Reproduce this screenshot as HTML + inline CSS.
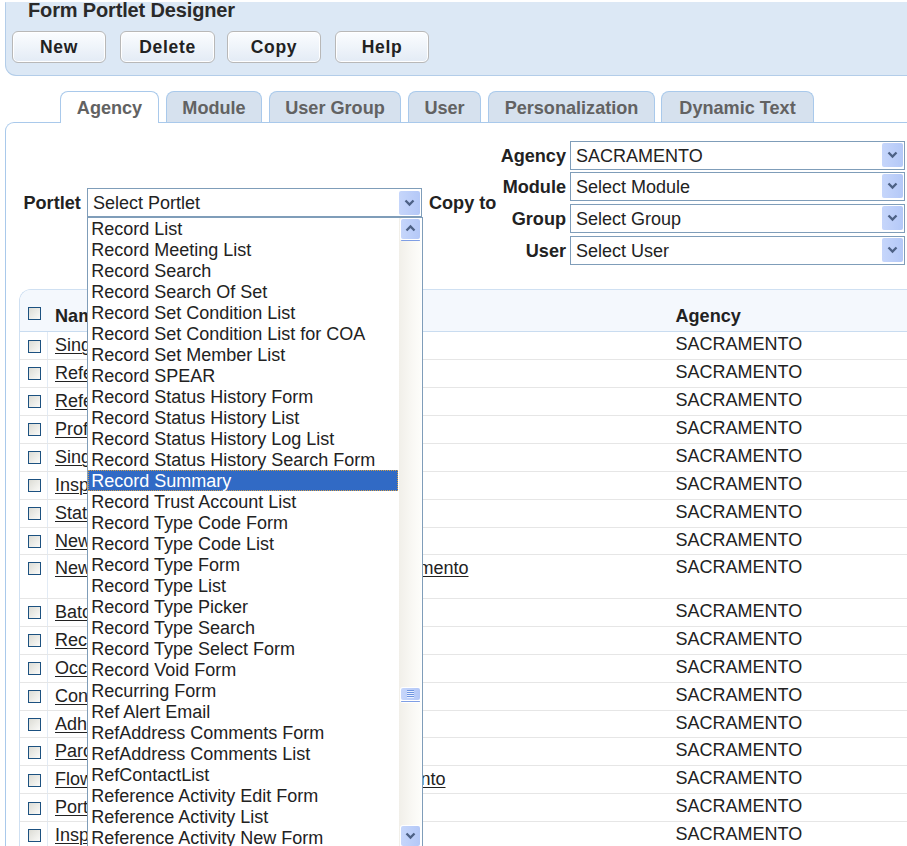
<!DOCTYPE html>
<html><head><meta charset="utf-8"><style>
html,body{margin:0;padding:0;background:#fff;width:907px;height:846px;overflow:hidden;}
body{position:relative;font-family:"Liberation Sans",sans-serif;}
.t{position:absolute;white-space:nowrap;}
.b{position:absolute;box-sizing:border-box;}
.btn{border:1px solid #b8b8b8;border-radius:6px;box-shadow:inset 0 0 0 1px #fff;background:linear-gradient(#fbfdff,#e3ebf5);}
.tab{border:1px solid #a9c9eb;border-bottom:none;border-radius:8px 8px 0 0;background:#d6e1ee;}
.tab.on{background:#fff;}
.sel{border:1px solid #7f9db9;background:#fff;}
.arr{border-radius:2px;background:linear-gradient(90deg,#c6d6fb,#b4c8f7);}
.cb{border:1px solid #1c5180;background:linear-gradient(135deg,#dcdcd5,#fafaf8);}
u{text-decoration:underline;text-underline-offset:1.5px;text-decoration-thickness:1px;}
</style></head><body>

<div class="b " style="left:5px;top:2px;width:910px;height:74px;background:#dce8f5;border:1px solid #b3cde9;border-right:none;border-top-color:#dce8f5;border-bottom-left-radius:11px;"></div>
<div class="t " style="top:0.07px;font-size:20px;line-height:20px;color:#2a2a2a;font-weight:bold;letter-spacing:-0.15px;left:28.00px;">Form Portlet Designer</div>
<div class="b btn" style="left:12px;top:31px;width:94px;height:32px;"></div>
<div class="t" style="left:12px;width:94px;text-align:center;top:38.99px;font-size:17.5px;line-height:17.5px;font-weight:bold;color:#222;letter-spacing:0.7px;">New</div>
<div class="b btn" style="left:120px;top:31px;width:95px;height:32px;"></div>
<div class="t" style="left:120px;width:95px;text-align:center;top:38.99px;font-size:17.5px;line-height:17.5px;font-weight:bold;color:#222;letter-spacing:0.7px;">Delete</div>
<div class="b btn" style="left:227px;top:31px;width:94px;height:32px;"></div>
<div class="t" style="left:227px;width:94px;text-align:center;top:38.99px;font-size:17.5px;line-height:17.5px;font-weight:bold;color:#222;letter-spacing:0.7px;">Copy</div>
<div class="b btn" style="left:335px;top:31px;width:94px;height:32px;"></div>
<div class="t" style="left:335px;width:94px;text-align:center;top:38.99px;font-size:17.5px;line-height:17.5px;font-weight:bold;color:#222;letter-spacing:0.7px;">Help</div>
<div class="b " style="left:5px;top:122px;width:920px;height:760px;border:1px solid #a9c9eb;border-right:none;border-bottom:none;border-top-left-radius:9px;"></div>
<div class="b tab on" style="left:60px;top:91px;width:99px;height:32px;"></div>
<div class="t" style="left:60px;width:99px;text-align:center;top:99.38px;font-size:18.1px;line-height:18.1px;font-weight:bold;color:#626262;">Agency</div>
<div class="b tab" style="left:166px;top:91px;width:96px;height:31px;"></div>
<div class="t" style="left:166px;width:96px;text-align:center;top:99.38px;font-size:18.1px;line-height:18.1px;font-weight:bold;color:#626262;">Module</div>
<div class="b tab" style="left:269px;top:91px;width:132px;height:31px;"></div>
<div class="t" style="left:269px;width:132px;text-align:center;top:99.38px;font-size:18.1px;line-height:18.1px;font-weight:bold;color:#626262;">User Group</div>
<div class="b tab" style="left:408px;top:91px;width:73px;height:31px;"></div>
<div class="t" style="left:408px;width:73px;text-align:center;top:99.38px;font-size:18.1px;line-height:18.1px;font-weight:bold;color:#626262;">User</div>
<div class="b tab" style="left:488px;top:91px;width:167px;height:31px;"></div>
<div class="t" style="left:488px;width:167px;text-align:center;top:99.38px;font-size:18.1px;line-height:18.1px;font-weight:bold;color:#626262;">Personalization</div>
<div class="b tab" style="left:661px;top:91px;width:153px;height:31px;"></div>
<div class="t" style="left:661px;width:153px;text-align:center;top:99.38px;font-size:18.1px;line-height:18.1px;font-weight:bold;color:#626262;">Dynamic Text</div>
<div class="t " style="top:194.18px;font-size:18.1px;line-height:18.1px;color:#222;font-weight:bold;left:23.50px;">Portlet</div>
<div class="t " style="top:194.18px;font-size:18.1px;line-height:18.1px;color:#222;font-weight:bold;left:429.00px;">Copy to</div>
<div class="t " style="top:147.18px;font-size:18.1px;line-height:18.1px;color:#222;font-weight:bold;right:341.00px;">Agency</div>
<div class="b sel" style="left:570px;top:141px;width:335px;height:29px;"></div>
<div class="t " style="top:147.26px;font-size:18.0px;line-height:18.0px;color:#222;left:576.00px;">SACRAMENTO</div>
<div class="b arr" style="left:882px;top:143px;width:21px;height:24px;"><svg width="21" height="24" style="position:absolute;left:0;top:0"><g transform="translate(2.5,5.5)"><path d="M4 4 L8 8 L12 4" stroke="#4d6185" stroke-width="2.3" fill="none"/></g></svg></div>
<div class="t " style="top:178.18px;font-size:18.1px;line-height:18.1px;color:#222;font-weight:bold;right:341.00px;">Module</div>
<div class="b sel" style="left:570px;top:172px;width:335px;height:29px;"></div>
<div class="t " style="top:178.26px;font-size:18.0px;line-height:18.0px;color:#222;left:576.00px;">Select Module</div>
<div class="b arr" style="left:882px;top:174px;width:21px;height:24px;"><svg width="21" height="24" style="position:absolute;left:0;top:0"><g transform="translate(2.5,5.5)"><path d="M4 4 L8 8 L12 4" stroke="#4d6185" stroke-width="2.3" fill="none"/></g></svg></div>
<div class="t " style="top:210.18px;font-size:18.1px;line-height:18.1px;color:#222;font-weight:bold;right:341.00px;">Group</div>
<div class="b sel" style="left:570px;top:204px;width:335px;height:29px;"></div>
<div class="t " style="top:210.26px;font-size:18.0px;line-height:18.0px;color:#222;left:576.00px;">Select Group</div>
<div class="b arr" style="left:882px;top:206px;width:21px;height:24px;"><svg width="21" height="24" style="position:absolute;left:0;top:0"><g transform="translate(2.5,5.5)"><path d="M4 4 L8 8 L12 4" stroke="#4d6185" stroke-width="2.3" fill="none"/></g></svg></div>
<div class="t " style="top:242.18px;font-size:18.1px;line-height:18.1px;color:#222;font-weight:bold;right:341.00px;">User</div>
<div class="b sel" style="left:570px;top:236px;width:335px;height:29px;"></div>
<div class="t " style="top:242.26px;font-size:18.0px;line-height:18.0px;color:#222;left:576.00px;">Select User</div>
<div class="b arr" style="left:882px;top:238px;width:21px;height:24px;"><svg width="21" height="24" style="position:absolute;left:0;top:0"><g transform="translate(2.5,5.5)"><path d="M4 4 L8 8 L12 4" stroke="#4d6185" stroke-width="2.3" fill="none"/></g></svg></div>
<div class="b sel" style="left:87px;top:188px;width:335px;height:29px;"></div>
<div class="t " style="top:194.26px;font-size:18.0px;line-height:18.0px;color:#222;left:93.00px;">Select Portlet</div>
<div class="b arr" style="left:399px;top:191px;width:21px;height:24px;"><svg width="21" height="24" style="position:absolute;left:0;top:0"><g transform="translate(2.5,5.5)"><path d="M4 4 L8 8 L12 4" stroke="#4d6185" stroke-width="2.3" fill="none"/></g></svg></div>
<div class="b " style="left:19px;top:289px;width:900px;height:600px;border:1px solid #cfe0f2;border-right:none;border-bottom:none;border-top-left-radius:12px;overflow:hidden;"><div style="position:absolute;left:0;top:0;width:100%;height:41px;background:#f4f8fd;border-bottom:1px solid #c9dcf0;"></div></div>
<div class="b " style="left:47px;top:332px;width:1px;height:520px;background:#e2ebf5;"></div>
<div class="b " style="left:20px;top:359px;width:900px;height:1px;background:#e6e6e6;"></div>
<div class="b cb" style="left:28px;top:340px;width:13px;height:13px;"></div>
<div class="t " style="top:336.16px;font-size:18.0px;line-height:18.0px;color:#222;left:55.00px;width:360px;overflow:hidden;padding-bottom:6px;"><u>Single Record Detail</u></div>
<div class="t " style="top:334.96px;font-size:18.0px;line-height:18.0px;color:#222;left:675.50px;">SACRAMENTO</div>
<div class="b " style="left:20px;top:387px;width:900px;height:1px;background:#e6e6e6;"></div>
<div class="b cb" style="left:28px;top:367px;width:13px;height:13px;"></div>
<div class="t " style="top:364.16px;font-size:18.0px;line-height:18.0px;color:#222;left:55.00px;width:360px;overflow:hidden;padding-bottom:6px;"><u>Reference Contact Form</u></div>
<div class="t " style="top:362.96px;font-size:18.0px;line-height:18.0px;color:#222;left:675.50px;">SACRAMENTO</div>
<div class="b " style="left:20px;top:415px;width:900px;height:1px;background:#e6e6e6;"></div>
<div class="b cb" style="left:28px;top:395px;width:13px;height:13px;"></div>
<div class="t " style="top:392.16px;font-size:18.0px;line-height:18.0px;color:#222;left:55.00px;width:360px;overflow:hidden;padding-bottom:6px;"><u>Reference Address List</u></div>
<div class="t " style="top:390.96px;font-size:18.0px;line-height:18.0px;color:#222;left:675.50px;">SACRAMENTO</div>
<div class="b " style="left:20px;top:443px;width:900px;height:1px;background:#e6e6e6;"></div>
<div class="b cb" style="left:28px;top:423px;width:13px;height:13px;"></div>
<div class="t " style="top:420.16px;font-size:18.0px;line-height:18.0px;color:#222;left:55.00px;width:360px;overflow:hidden;padding-bottom:6px;"><u>Professional Form</u></div>
<div class="t " style="top:418.96px;font-size:18.0px;line-height:18.0px;color:#222;left:675.50px;">SACRAMENTO</div>
<div class="b " style="left:20px;top:471px;width:900px;height:1px;background:#e6e6e6;"></div>
<div class="b cb" style="left:28px;top:451px;width:13px;height:13px;"></div>
<div class="t " style="top:448.16px;font-size:18.0px;line-height:18.0px;color:#222;left:55.00px;width:360px;overflow:hidden;padding-bottom:6px;"><u>Single Contact Detail</u></div>
<div class="t " style="top:446.96px;font-size:18.0px;line-height:18.0px;color:#222;left:675.50px;">SACRAMENTO</div>
<div class="b " style="left:20px;top:499px;width:900px;height:1px;background:#e6e6e6;"></div>
<div class="b cb" style="left:28px;top:479px;width:13px;height:13px;"></div>
<div class="t " style="top:476.16px;font-size:18.0px;line-height:18.0px;color:#222;left:55.00px;width:360px;overflow:hidden;padding-bottom:6px;"><u>Inspection List</u></div>
<div class="t " style="top:474.96px;font-size:18.0px;line-height:18.0px;color:#222;left:675.50px;">SACRAMENTO</div>
<div class="b " style="left:20px;top:527px;width:900px;height:1px;background:#e6e6e6;"></div>
<div class="b cb" style="left:28px;top:507px;width:13px;height:13px;"></div>
<div class="t " style="top:504.16px;font-size:18.0px;line-height:18.0px;color:#222;left:55.00px;width:360px;overflow:hidden;padding-bottom:6px;"><u>Status Form</u></div>
<div class="t " style="top:502.96px;font-size:18.0px;line-height:18.0px;color:#222;left:675.50px;">SACRAMENTO</div>
<div class="b " style="left:20px;top:554px;width:900px;height:1px;background:#e6e6e6;"></div>
<div class="b cb" style="left:28px;top:535px;width:13px;height:13px;"></div>
<div class="t " style="top:532.16px;font-size:18.0px;line-height:18.0px;color:#222;left:55.00px;width:360px;overflow:hidden;padding-bottom:6px;"><u>New Record</u></div>
<div class="t " style="top:530.96px;font-size:18.0px;line-height:18.0px;color:#222;left:675.50px;">SACRAMENTO</div>
<div class="b " style="left:20px;top:598px;width:900px;height:1px;background:#e6e6e6;"></div>
<div class="b cb" style="left:28px;top:562px;width:13px;height:13px;"></div>
<div class="t " style="top:559.16px;font-size:18.0px;line-height:18.0px;color:#222;left:55.00px;width:360px;overflow:hidden;padding-bottom:6px;"><u>New Record Detail Form for Sacramento</u></div>
<div class="t " style="top:559.16px;font-size:18.0px;line-height:18.0px;color:#222;right:438.50px;"><u>Detail Form for Sacramento</u></div>
<div class="t " style="top:557.96px;font-size:18.0px;line-height:18.0px;color:#222;left:675.50px;">SACRAMENTO</div>
<div class="b " style="left:20px;top:626px;width:900px;height:1px;background:#e6e6e6;"></div>
<div class="b cb" style="left:28px;top:606px;width:13px;height:13px;"></div>
<div class="t " style="top:603.16px;font-size:18.0px;line-height:18.0px;color:#222;left:55.00px;width:360px;overflow:hidden;padding-bottom:6px;"><u>Batch Job List</u></div>
<div class="t " style="top:601.96px;font-size:18.0px;line-height:18.0px;color:#222;left:675.50px;">SACRAMENTO</div>
<div class="b " style="left:20px;top:654px;width:900px;height:1px;background:#e6e6e6;"></div>
<div class="b cb" style="left:28px;top:634px;width:13px;height:13px;"></div>
<div class="t " style="top:631.16px;font-size:18.0px;line-height:18.0px;color:#222;left:55.00px;width:360px;overflow:hidden;padding-bottom:6px;"><u>Record Detail</u></div>
<div class="t " style="top:629.96px;font-size:18.0px;line-height:18.0px;color:#222;left:675.50px;">SACRAMENTO</div>
<div class="b " style="left:20px;top:682px;width:900px;height:1px;background:#e6e6e6;"></div>
<div class="b cb" style="left:28px;top:662px;width:13px;height:13px;"></div>
<div class="t " style="top:659.16px;font-size:18.0px;line-height:18.0px;color:#222;left:55.00px;width:360px;overflow:hidden;padding-bottom:6px;"><u>Occurrence Form</u></div>
<div class="t " style="top:657.96px;font-size:18.0px;line-height:18.0px;color:#222;left:675.50px;">SACRAMENTO</div>
<div class="b " style="left:20px;top:710px;width:900px;height:1px;background:#e6e6e6;"></div>
<div class="b cb" style="left:28px;top:690px;width:13px;height:13px;"></div>
<div class="t " style="top:687.16px;font-size:18.0px;line-height:18.0px;color:#222;left:55.00px;width:360px;overflow:hidden;padding-bottom:6px;"><u>Condition List</u></div>
<div class="t " style="top:685.96px;font-size:18.0px;line-height:18.0px;color:#222;left:675.50px;">SACRAMENTO</div>
<div class="b " style="left:20px;top:737px;width:900px;height:1px;background:#e6e6e6;"></div>
<div class="b cb" style="left:28px;top:718px;width:13px;height:13px;"></div>
<div class="t " style="top:715.16px;font-size:18.0px;line-height:18.0px;color:#222;left:55.00px;width:360px;overflow:hidden;padding-bottom:6px;"><u>Adhoc Report</u></div>
<div class="t " style="top:713.96px;font-size:18.0px;line-height:18.0px;color:#222;left:675.50px;">SACRAMENTO</div>
<div class="b " style="left:20px;top:765px;width:900px;height:1px;background:#e6e6e6;"></div>
<div class="b cb" style="left:28px;top:746px;width:13px;height:13px;"></div>
<div class="t " style="top:742.16px;font-size:18.0px;line-height:18.0px;color:#222;left:55.00px;width:360px;overflow:hidden;padding-bottom:6px;"><u>Parcel List</u></div>
<div class="t " style="top:740.96px;font-size:18.0px;line-height:18.0px;color:#222;left:675.50px;">SACRAMENTO</div>
<div class="b " style="left:20px;top:793px;width:900px;height:1px;background:#e6e6e6;"></div>
<div class="b cb" style="left:28px;top:774px;width:13px;height:13px;"></div>
<div class="t " style="top:770.16px;font-size:18.0px;line-height:18.0px;color:#222;left:55.00px;width:360px;overflow:hidden;padding-bottom:6px;"><u>Flow Portlet for Sacramento</u></div>
<div class="t " style="top:770.16px;font-size:18.0px;line-height:18.0px;color:#222;right:461.50px;"><u>Portlet for Sacramento</u></div>
<div class="t " style="top:768.96px;font-size:18.0px;line-height:18.0px;color:#222;left:675.50px;">SACRAMENTO</div>
<div class="b " style="left:20px;top:821px;width:900px;height:1px;background:#e6e6e6;"></div>
<div class="b cb" style="left:28px;top:802px;width:13px;height:13px;"></div>
<div class="t " style="top:798.16px;font-size:18.0px;line-height:18.0px;color:#222;left:55.00px;width:360px;overflow:hidden;padding-bottom:6px;"><u>Portlet List</u></div>
<div class="t " style="top:796.96px;font-size:18.0px;line-height:18.0px;color:#222;left:675.50px;">SACRAMENTO</div>
<div class="b " style="left:20px;top:849px;width:900px;height:1px;background:#e6e6e6;"></div>
<div class="b cb" style="left:28px;top:829px;width:13px;height:13px;"></div>
<div class="t " style="top:826.16px;font-size:18.0px;line-height:18.0px;color:#222;left:55.00px;width:360px;overflow:hidden;padding-bottom:6px;"><u>Inspection Form</u></div>
<div class="t " style="top:824.96px;font-size:18.0px;line-height:18.0px;color:#222;left:675.50px;">SACRAMENTO</div>
<div class="b cb" style="left:28px;top:307px;width:13px;height:13px;"></div>
<div class="t " style="top:306.68px;font-size:18.1px;line-height:18.1px;color:#222;font-weight:bold;left:55.00px;">Name</div>
<div class="t " style="top:306.68px;font-size:18.1px;line-height:18.1px;color:#222;font-weight:bold;left:675.50px;">Agency</div>
<div class="b " style="left:87px;top:217px;width:336px;height:640px;border:1px solid #7f9db9;background:#fff;"></div>
<div class="t " style="top:220.36px;font-size:18.0px;line-height:18.0px;color:#222;left:91.20px;">Record List</div>
<div class="t " style="top:241.36px;font-size:18.0px;line-height:18.0px;color:#222;left:91.20px;">Record Meeting List</div>
<div class="t " style="top:262.36px;font-size:18.0px;line-height:18.0px;color:#222;left:91.20px;">Record Search</div>
<div class="t " style="top:283.36px;font-size:18.0px;line-height:18.0px;color:#222;left:91.20px;">Record Search Of Set</div>
<div class="t " style="top:304.36px;font-size:18.0px;line-height:18.0px;color:#222;left:91.20px;">Record Set Condition List</div>
<div class="t " style="top:325.36px;font-size:18.0px;line-height:18.0px;color:#222;left:91.20px;">Record Set Condition List for COA</div>
<div class="t " style="top:346.36px;font-size:18.0px;line-height:18.0px;color:#222;left:91.20px;">Record Set Member List</div>
<div class="t " style="top:367.36px;font-size:18.0px;line-height:18.0px;color:#222;left:91.20px;">Record SPEAR</div>
<div class="t " style="top:388.36px;font-size:18.0px;line-height:18.0px;color:#222;left:91.20px;">Record Status History Form</div>
<div class="t " style="top:409.36px;font-size:18.0px;line-height:18.0px;color:#222;left:91.20px;">Record Status History List</div>
<div class="t " style="top:430.36px;font-size:18.0px;line-height:18.0px;color:#222;left:91.20px;">Record Status History Log List</div>
<div class="t " style="top:451.36px;font-size:18.0px;line-height:18.0px;color:#222;left:91.20px;">Record Status History Search Form</div>
<div class="b " style="left:88px;top:470px;width:310px;height:21px;background:#316ac5;border:1px dotted #d4a04a;"></div>
<div class="t " style="top:472.36px;font-size:18.0px;line-height:18.0px;color:#fff;left:91.20px;">Record Summary</div>
<div class="t " style="top:493.36px;font-size:18.0px;line-height:18.0px;color:#222;left:91.20px;">Record Trust Account List</div>
<div class="t " style="top:514.36px;font-size:18.0px;line-height:18.0px;color:#222;left:91.20px;">Record Type Code Form</div>
<div class="t " style="top:535.36px;font-size:18.0px;line-height:18.0px;color:#222;left:91.20px;">Record Type Code List</div>
<div class="t " style="top:556.36px;font-size:18.0px;line-height:18.0px;color:#222;left:91.20px;">Record Type Form</div>
<div class="t " style="top:577.36px;font-size:18.0px;line-height:18.0px;color:#222;left:91.20px;">Record Type List</div>
<div class="t " style="top:598.36px;font-size:18.0px;line-height:18.0px;color:#222;left:91.20px;">Record Type Picker</div>
<div class="t " style="top:619.36px;font-size:18.0px;line-height:18.0px;color:#222;left:91.20px;">Record Type Search</div>
<div class="t " style="top:640.36px;font-size:18.0px;line-height:18.0px;color:#222;left:91.20px;">Record Type Select Form</div>
<div class="t " style="top:661.36px;font-size:18.0px;line-height:18.0px;color:#222;left:91.20px;">Record Void Form</div>
<div class="t " style="top:682.36px;font-size:18.0px;line-height:18.0px;color:#222;left:91.20px;">Recurring Form</div>
<div class="t " style="top:703.36px;font-size:18.0px;line-height:18.0px;color:#222;left:91.20px;">Ref Alert Email</div>
<div class="t " style="top:724.36px;font-size:18.0px;line-height:18.0px;color:#222;left:91.20px;">RefAddress Comments Form</div>
<div class="t " style="top:745.36px;font-size:18.0px;line-height:18.0px;color:#222;left:91.20px;">RefAddress Comments List</div>
<div class="t " style="top:766.36px;font-size:18.0px;line-height:18.0px;color:#222;left:91.20px;">RefContactList</div>
<div class="t " style="top:787.36px;font-size:18.0px;line-height:18.0px;color:#222;left:91.20px;">Reference Activity Edit Form</div>
<div class="t " style="top:808.36px;font-size:18.0px;line-height:18.0px;color:#222;left:91.20px;">Reference Activity List</div>
<div class="t " style="top:829.36px;font-size:18.0px;line-height:18.0px;color:#222;left:91.20px;">Reference Activity New Form</div>
<div class="b " style="left:399px;top:218px;width:22px;height:630px;background:linear-gradient(90deg,#f1efe9,#f9f8f4 60%,#fdfdfa);"></div>
<div class="b " style="left:400px;top:218px;width:21px;height:23px;background:#fff;border-radius:3px;"></div>
<div class="b " style="left:401px;top:240px;width:19px;height:1px;background:#7f9ee4;border-radius:1px;"></div>
<div class="b arr" style="left:401px;top:219px;width:19px;height:20px;"><svg width="19" height="20" style="position:absolute;left:0;top:0"><g transform="translate(1.5,3.5)"><path d="M4 8 L8 4 L12 8" stroke="#4d6185" stroke-width="2.3" fill="none"/></g></svg></div>
<div class="b " style="left:400px;top:687px;width:21px;height:16px;background:#fff;border-radius:3px;"></div>
<div class="b " style="left:401px;top:701px;width:19px;height:1px;background:#7f9ee4;border-radius:1px;"></div>
<div class="b " style="left:401px;top:688px;width:19px;height:12px;border-radius:2px;background:linear-gradient(90deg,#c6d6fb,#b4c8f7);"><div style="position:absolute;left:6px;top:2px;width:7px;height:8px;background:repeating-linear-gradient(#6f95e0 0 1px,#e8efff 1px 2px);"></div></div>
<div class="b " style="left:400px;top:825px;width:21px;height:23px;background:#fff;border-radius:3px;"></div>
<div class="b arr" style="left:401px;top:826px;width:19px;height:20px;"><svg width="19" height="20" style="position:absolute;left:0;top:0"><g transform="translate(1.5,3.5)"><path d="M4 4 L8 8 L12 4" stroke="#4d6185" stroke-width="2.3" fill="none"/></g></svg></div>
</body></html>
